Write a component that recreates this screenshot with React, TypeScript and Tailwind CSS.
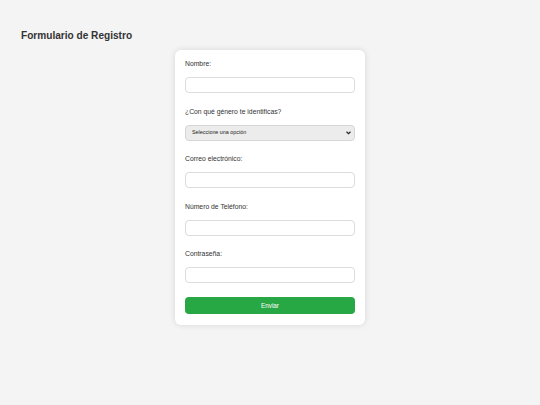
import { useState } from 'react';

// Simple registration form
function Field({ label, children }: { label: string; children: React.ReactNode }) {
  return (
    <div className="mb-[13.5px]">
      <label className="block text-[6.8px] leading-[10px] text-[#333] mb-[8px]">{label}</label>
      {children}
    </div>
  );
}

export default function App() {
  const [genero, setGenero] = useState('');

  const inputCls =
    'block w-full h-[16px] rounded-[4px] border border-[#dcdcdc] bg-white px-[4px] text-[7px] outline-none';

  return (
    <div className="min-h-[405px] w-full bg-[#f4f4f4] font-['Liberation_Sans',Arial,sans-serif] text-[#333]">
      <div className="pl-[21px] pt-[28.5px]">
        <h1 className="text-[10.1px] leading-[14px] font-bold text-[#333]">Formulario de Registro</h1>
      </div>
      <div className="mt-[7.5px] ml-[175px] w-[190px] rounded-[6px] bg-white px-[10px] pt-[9px] pb-[11px] shadow-[0_0_6px_rgba(0,0,0,0.12)]">
        <form onSubmit={(e) => e.preventDefault()}>
          <Field label="Nombre:">
            <input type="text" className={inputCls} />
          </Field>
          <Field label="¿Con qué género te identificas?">
            <div className="relative">
              <select
                value={genero}
                onChange={(e) => setGenero(e.target.value)}
                className="block w-full h-[16px] appearance-none rounded-[4px] border border-[#d6d6d6] bg-[#ececec] pl-[6px] text-[5.4px] text-[#222] outline-none"
              >
                <option value="">Seleccione una opción</option>
                <option value="m">Masculino</option>
                <option value="f">Femenino</option>
                <option value="o">Otro</option>
              </select>
              <svg
                className="pointer-events-none absolute right-[4px] top-[6px] h-[4px] w-[5px]"
                viewBox="0 0 10 8"
              >
                <path d="M1 1.5 L5 5.5 L9 1.5" stroke="#222" strokeWidth="2.2" fill="none" />
              </svg>
            </div>
          </Field>
          <Field label="Correo electrónico:">
            <input type="email" className={inputCls} />
          </Field>
          <Field label="Número de Teléfono:">
            <input type="tel" className={inputCls} />
          </Field>
          <Field label="Contraseña:">
            <input type="password" className={inputCls} />
          </Field>
          <button
            type="submit"
            className="mt-[1.5px] block w-full h-[17.5px] rounded-[4px] bg-[#28a745] text-[6.3px] text-white"
          >
            Enviar
          </button>
        </form>
      </div>
    </div>
  );
}
